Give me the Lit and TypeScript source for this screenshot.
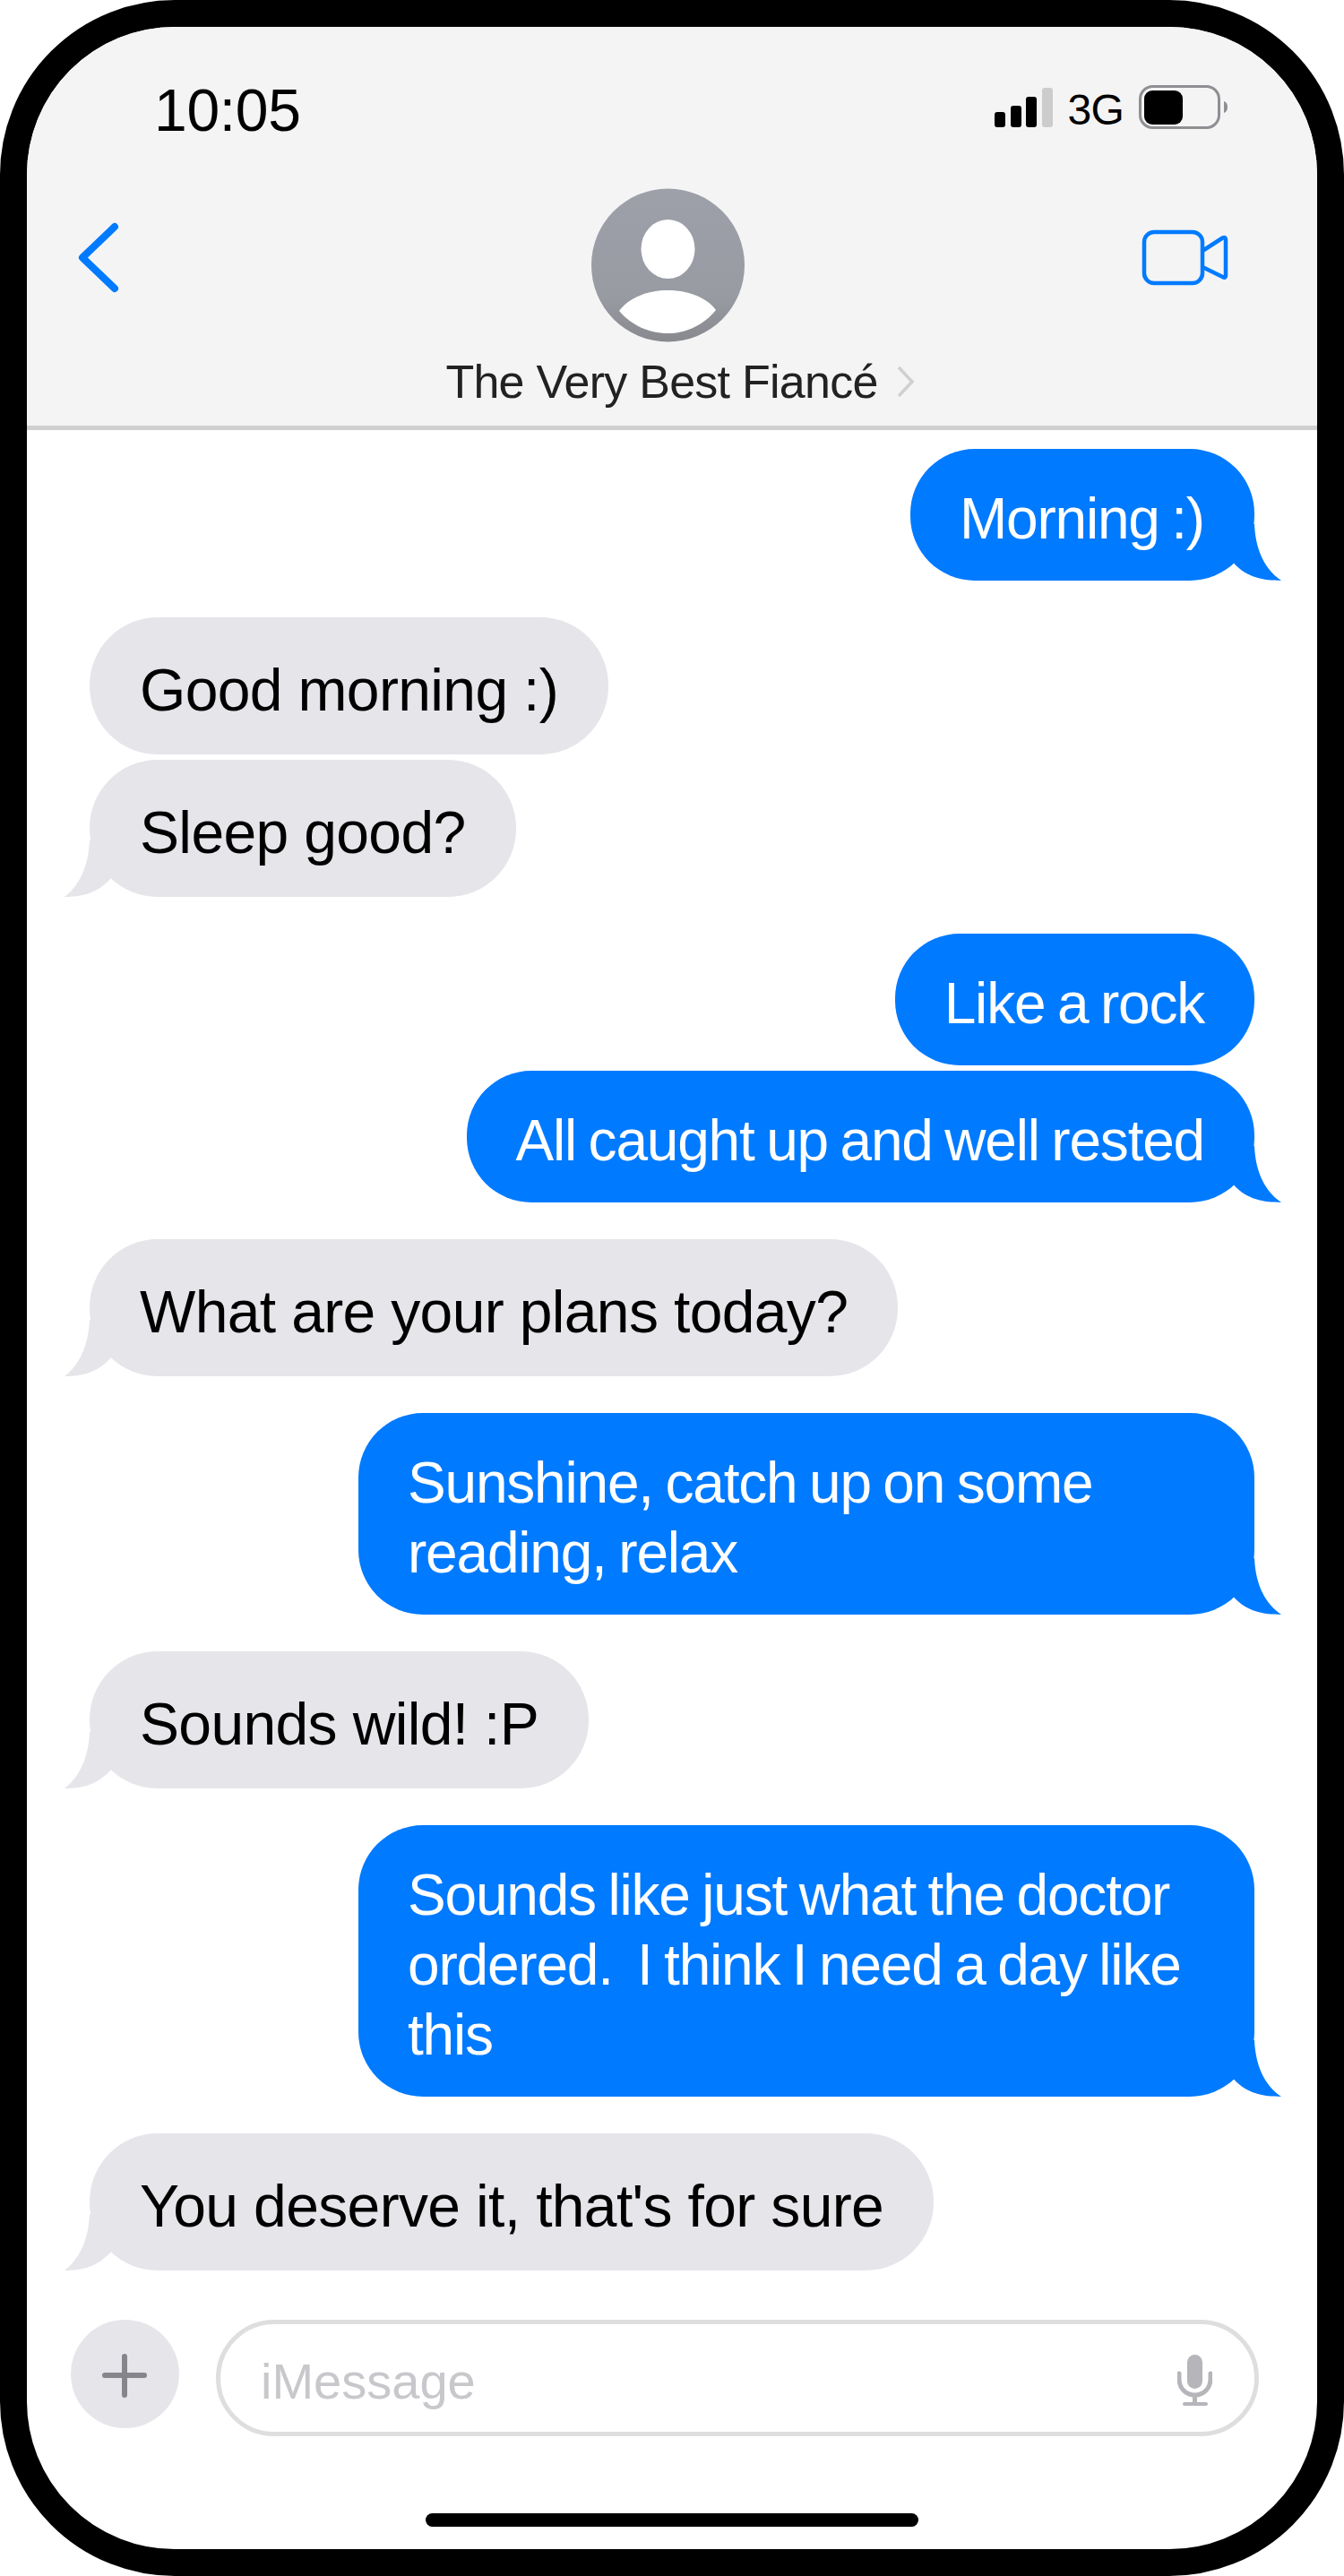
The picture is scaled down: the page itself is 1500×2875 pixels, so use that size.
import { LitElement, css, html, svg } from "lit";
import { customElement } from "lit/decorators.js";

type Group = { mine: boolean; texts: string[] };

const groups: Group[] = [
  { mine: true, texts: ["Morning :)"] },
  { mine: false, texts: ["Good morning :)", "Sleep good?"] },
  { mine: true, texts: ["Like a rock", "All caught up and well rested"] },
  { mine: false, texts: ["What are your plans today?"] },
  { mine: true, texts: ["Sunshine, catch up on some reading, relax"] },
  { mine: false, texts: ["Sounds wild! :P"] },
  { mine: true, texts: ["Sounds like just what the doctor ordered.  I think I need a day like this"] },
  { mine: false, texts: ["You deserve it, that's for sure"] },
];

const tailMine = svg`<svg class="tail" width="60" height="90" viewBox="0 0 60 90"><path d="M30 27C31 50 38 75 60 90C40 90 22 87 7 70.6L0 30Z"/></svg>`;
const tailTheirs = svg`<svg class="tail" width="60" height="90" viewBox="0 0 60 90"><path d="M30 27C29 50 22 75 2 90C20 90 38 87 54 69L60 30Z"/></svg>`;

@customElement("app-root")
export class AppRoot extends LitElement {
  static styles = css`
    :host {
      display: block;
      width: 1500px;
      height: 2875px;
      background: #fff;
      font-family: "Liberation Sans", Arial, sans-serif;
    }

    .phone {
      box-sizing: border-box;
      width: 1500px;
      height: 2875px;
      border: 30px solid #000;
      border-radius: 195px;
      background: #fff;
      overflow: hidden;
      display: flex;
      flex-direction: column;
    }

    header {
      box-sizing: border-box;
      height: 450px;
      flex: none;
      padding-top: 65px;
      background: #f4f4f4;
      border-bottom: 5px solid #cfcfcf;
    }

    .status {
      height: 49px;
      display: flex;
      align-items: center;
      padding: 0 100px 0 142px;
      color: #000;
    }

    .time {
      font-size: 66px;
      line-height: 49px;
      padding-top: 7px;
      margin-right: auto;
      letter-spacing: -0.3px;
    }

    .net {
      font-size: 48px;
      line-height: 49px;
      padding-top: 5px;
      margin: 0 17px;
      letter-spacing: -0.8px;
    }

    .status svg {
      display: block;
    }

    nav {
      display: grid;
      grid-template-columns: 1fr auto 1fr;
      margin-top: 66px;
      padding-right: 10px;
    }

    .back {
      margin: 35px 0 0 55px;
    }

    .video {
      justify-self: end;
      margin: 40px 85px 0 0;
    }

    .contact {
      display: flex;
      flex-direction: column;
      align-items: center;
    }

    .avatar {
      display: block;
    }

    .name-row {
      display: flex;
      align-items: center;
      gap: 21px;
      margin: 14px 0 0 27px;
    }

    .name {
      font-size: 52px;
      line-height: 60px;
      color: #222;
      letter-spacing: -0.75px;
    }

    .thread {
      flex: 1;
      display: flex;
      flex-direction: column;
      gap: 41px;
      padding: 21px 70px 0;
    }

    .group {
      display: flex;
      flex-direction: column;
      gap: 6px;
    }

    .group.mine {
      align-items: flex-end;
    }

    .group.theirs {
      align-items: flex-start;
    }

    .bubble {
      position: relative;
      box-sizing: border-box;
      max-width: 1000px;
      white-space: pre-wrap;
    }

    .mine .bubble {
      padding: 39px 56px 30px 55px;
      border-radius: 72px;
      background: #007aff;
      color: #fff;
      font-size: 64px;
      line-height: 78px;
      letter-spacing: -1.2px;
      word-spacing: -3px;
    }

    .theirs .bubble {
      padding: 42px 56px 33px;
      border-radius: 76px;
      background: #e5e5ea;
      color: #000;
      font-size: 66px;
      line-height: 78px;
      letter-spacing: -0.65px;
    }

    .tail {
      position: absolute;
      bottom: 0;
      display: block;
    }

    .mine .tail {
      right: -30px;
      fill: #007aff;
    }

    .theirs .tail {
      left: -30px;
      fill: #e5e5ea;
    }

    .composer {
      display: flex;
      align-items: flex-start;
      gap: 41px;
      margin-top: 55px;
      padding-left: 49px;
    }

    .plus {
      width: 121px;
      height: 121px;
      flex: none;
      display: block;
    }

    .field {
      box-sizing: border-box;
      width: 1164px;
      height: 130px;
      flex: none;
      display: flex;
      align-items: center;
      padding: 6px 47px 0 45px;
      border: 5px solid #dedede;
      border-radius: 65px;
    }

    .placeholder {
      font-size: 56px;
      color: #c8c8cc;
      margin-right: auto;
    }

    .home {
      width: 550px;
      height: 15px;
      flex: none;
      margin: 86px auto 25px;
      border-radius: 8px;
      background: #000;
    }
  `;

  private bubble(text: string, mine: boolean, last: boolean) {
    return html`<div class="bubble">${text}${last ? (mine ? tailMine : tailTheirs) : null}</div>`;
  }

  render() {
    return html`
      <div class="phone">
        <header>
          <div class="status">
            <span class="time">10:05</span>
            <svg width="65" height="44" viewBox="0 0 65 44">
              <rect x="0" y="27" width="12" height="17" rx="3" fill="#000" />
              <rect x="18" y="20" width="12" height="24" rx="3" fill="#000" />
              <rect x="35" y="10" width="12" height="34" rx="3" fill="#000" />
              <rect x="53" y="0" width="12" height="44" rx="3" fill="#ccc" />
            </svg>
            <span class="net">3G</span>
            <svg width="99" height="49" viewBox="0 0 99 49">
              <rect x="1.5" y="1.5" width="88" height="46" rx="14" fill="none" stroke="#8e8e93" stroke-width="3" />
              <rect x="6" y="6" width="43" height="38" rx="9" fill="#000" />
              <path d="M95 18C98 19 99 21.5 99 24.5C99 27.500 98 30 95 31Z" fill="#8e8e93" />
            </svg>
          </div>
          <nav>
            <svg class="back" width="50" height="86" viewBox="0 0 50 86">
              <path d="M43 8L7 42.500L43 77" fill="none" stroke="#007aff" stroke-width="8" stroke-linecap="round" stroke-linejoin="round" />
            </svg>
            <div class="contact">
              <svg class="avatar" width="171" height="172" viewBox="0 0 171 172">
                <defs>
                  <linearGradient id="face" x1="0" y1="0" x2="0" y2="1">
                    <stop offset="0" stop-color="#9da0a9" />
                    <stop offset="0.7" stop-color="#999ba3" />
                    <stop offset="1" stop-color="#88898e" />
                  </linearGradient>
                </defs>
                <circle cx="85.5" cy="86" r="85.500" fill="url(#face)" />
                <ellipse cx="85.5" cy="68" rx="30" ry="33" fill="#fff" />
                <path d="M31 137C42 122 63 114 85.500 114C108 114 129 122 139 136C126 152 107 162 85.500 162C63 162 44 152 31 137Z" fill="#fff" />
              </svg>
              <div class="name-row">
                <span class="name">The Very Best Fiancé</span>
                <svg width="19" height="36" viewBox="0 0 19 36">
                  <path d="M2 2L17 18L2 34" fill="none" stroke="#d0d0d0" stroke-width="3.500" />
                </svg>
              </div>
            </div>
            <svg class="video" width="105" height="75" viewBox="0 0 105 75">
              <rect x="7" y="9" width="65" height="57" rx="11" fill="none" stroke="#007aff" stroke-width="4.500" />
              <path d="M72 30L94.500 15.500Q98 14 98 17.500V57.500Q98 61 94.500 59L72 48" fill="none" stroke="#007aff" stroke-width="4.500" stroke-linejoin="round" />
            </svg>
          </nav>
        </header>

        <div class="thread">
          ${groups.map(
            (g) => html`
              <div class="group ${g.mine ? "mine" : "theirs"}">
                ${g.texts.map((t, i) => this.bubble(t, g.mine, i === g.texts.length - 1))}
              </div>
            `
          )}
        </div>

        <div class="composer">
          <svg class="plus" viewBox="0 0 121 121">
            <circle cx="60.5" cy="60.5" r="60.500" fill="#e6e6ea" />
            <path d="M60 41V84M38 62H82" fill="none" stroke="#85858b" stroke-width="6" stroke-linecap="round" />
          </svg>
          <div class="field">
            <span class="placeholder">iMessage</span>
            <svg width="39" height="58" viewBox="0 0 39 58">
              <rect x="11" y="0" width="17" height="38" rx="8.500" fill="#b5b5ba" />
              <path d="M2 21V27C2 37 9 45 19.500 45C30 45 37 37 37 27V21M19.500 45V54" fill="none" stroke="#b5b5ba" stroke-width="5" stroke-linecap="round" />
              <rect x="6" y="53" width="28" height="4" rx="2" fill="#b5b5ba" />
            </svg>
          </div>
        </div>

        <div class="home"></div>
      </div>
    `;
  }
}
